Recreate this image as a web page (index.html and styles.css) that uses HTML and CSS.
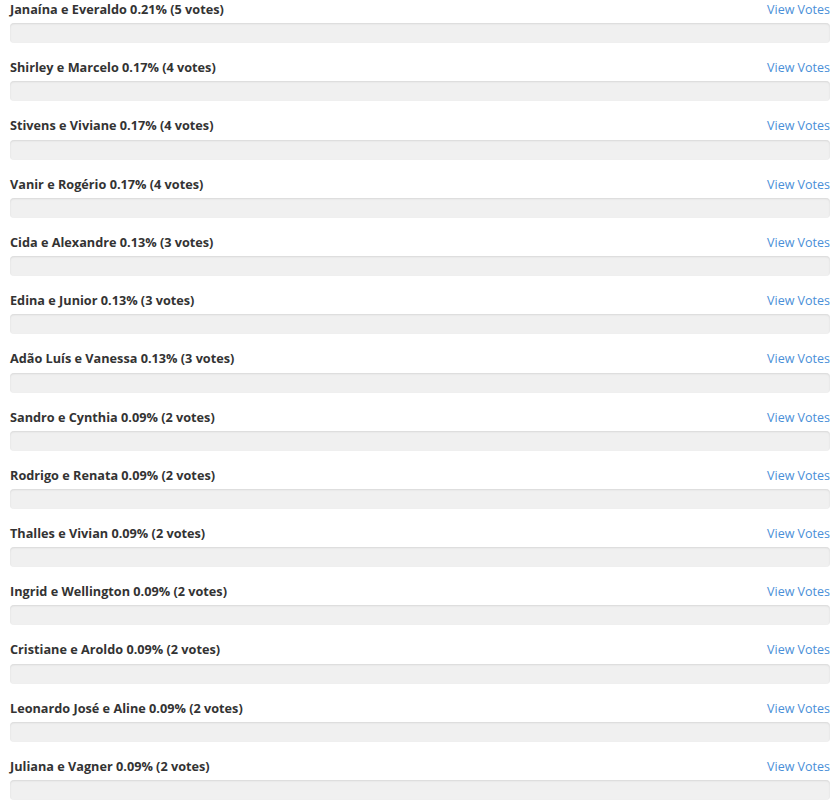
FILE: index.html
```html
<!DOCTYPE html>
<html>
<head>
    <title>Poll Results</title>
    <link rel="stylesheet" href="styles.css">
</head>
<body>
    <div class="results">
        <div class="result">
            <div class="result-head"><strong>Janaína e Everaldo 0.21% (5 votes)</strong><a href="#" class="view-votes">View Votes</a></div>
            <div class="progress"></div>
        </div>
        <div class="result">
            <div class="result-head"><strong>Shirley e Marcelo 0.17% (4 votes)</strong><a href="#" class="view-votes">View Votes</a></div>
            <div class="progress"></div>
        </div>
        <div class="result">
            <div class="result-head"><strong>Stivens e Viviane 0.17% (4 votes)</strong><a href="#" class="view-votes">View Votes</a></div>
            <div class="progress"></div>
        </div>
        <div class="result">
            <div class="result-head"><strong>Vanir e Rogério 0.17% (4 votes)</strong><a href="#" class="view-votes">View Votes</a></div>
            <div class="progress"></div>
        </div>
        <div class="result">
            <div class="result-head"><strong>Cida e Alexandre 0.13% (3 votes)</strong><a href="#" class="view-votes">View Votes</a></div>
            <div class="progress"></div>
        </div>
        <div class="result">
            <div class="result-head"><strong>Edina e Junior 0.13% (3 votes)</strong><a href="#" class="view-votes">View Votes</a></div>
            <div class="progress"></div>
        </div>
        <div class="result">
            <div class="result-head"><strong>Adão Luís e Vanessa 0.13% (3 votes)</strong><a href="#" class="view-votes">View Votes</a></div>
            <div class="progress"></div>
        </div>
        <div class="result">
            <div class="result-head"><strong>Sandro e Cynthia 0.09% (2 votes)</strong><a href="#" class="view-votes">View Votes</a></div>
            <div class="progress"></div>
        </div>
        <div class="result">
            <div class="result-head"><strong>Rodrigo e Renata 0.09% (2 votes)</strong><a href="#" class="view-votes">View Votes</a></div>
            <div class="progress"></div>
        </div>
        <div class="result">
            <div class="result-head"><strong>Thalles e Vivian 0.09% (2 votes)</strong><a href="#" class="view-votes">View Votes</a></div>
            <div class="progress"></div>
        </div>
        <div class="result">
            <div class="result-head"><strong>Ingrid e Wellington 0.09% (2 votes)</strong><a href="#" class="view-votes">View Votes</a></div>
            <div class="progress"></div>
        </div>
        <div class="result">
            <div class="result-head"><strong>Cristiane e Aroldo 0.09% (2 votes)</strong><a href="#" class="view-votes">View Votes</a></div>
            <div class="progress"></div>
        </div>
        <div class="result">
            <div class="result-head"><strong>Leonardo José e Aline 0.09% (2 votes)</strong><a href="#" class="view-votes">View Votes</a></div>
            <div class="progress"></div>
        </div>
        <div class="result">
            <div class="result-head"><strong>Juliana e Vagner 0.09% (2 votes)</strong><a href="#" class="view-votes">View Votes</a></div>
            <div class="progress"></div>
        </div>
    </div>
</body>
</html>
```

FILE: styles.css
```css
body {
    margin: 0;
    background-color: #fff;
    font-family: "Open Sans", "Noto Sans", sans-serif;
    font-size: 12px;
    color: #333;
}
.results {
    padding: 0 3px 0 10px;
}
.result {
    margin-bottom: 15px;
}
.result-head {
    display: flex;
    justify-content: space-between;
    align-items: baseline;
    height: 18.23px;
    line-height: 18.23px;
    margin-bottom: 5px;
}
.result-head strong {
    font-weight: 700;
    font-size: 12.7px;
    color: #333;
}
.view-votes {
    color: #4a8fd8;
    text-decoration: none;
    font-size: 12.5px;
}
.progress {
    height: 20px;
    background-color: #f0f0f0;
    border-radius: 4px;
    box-shadow: inset 0 1px 2px rgba(0, 0, 0, 0.1);
}
```
